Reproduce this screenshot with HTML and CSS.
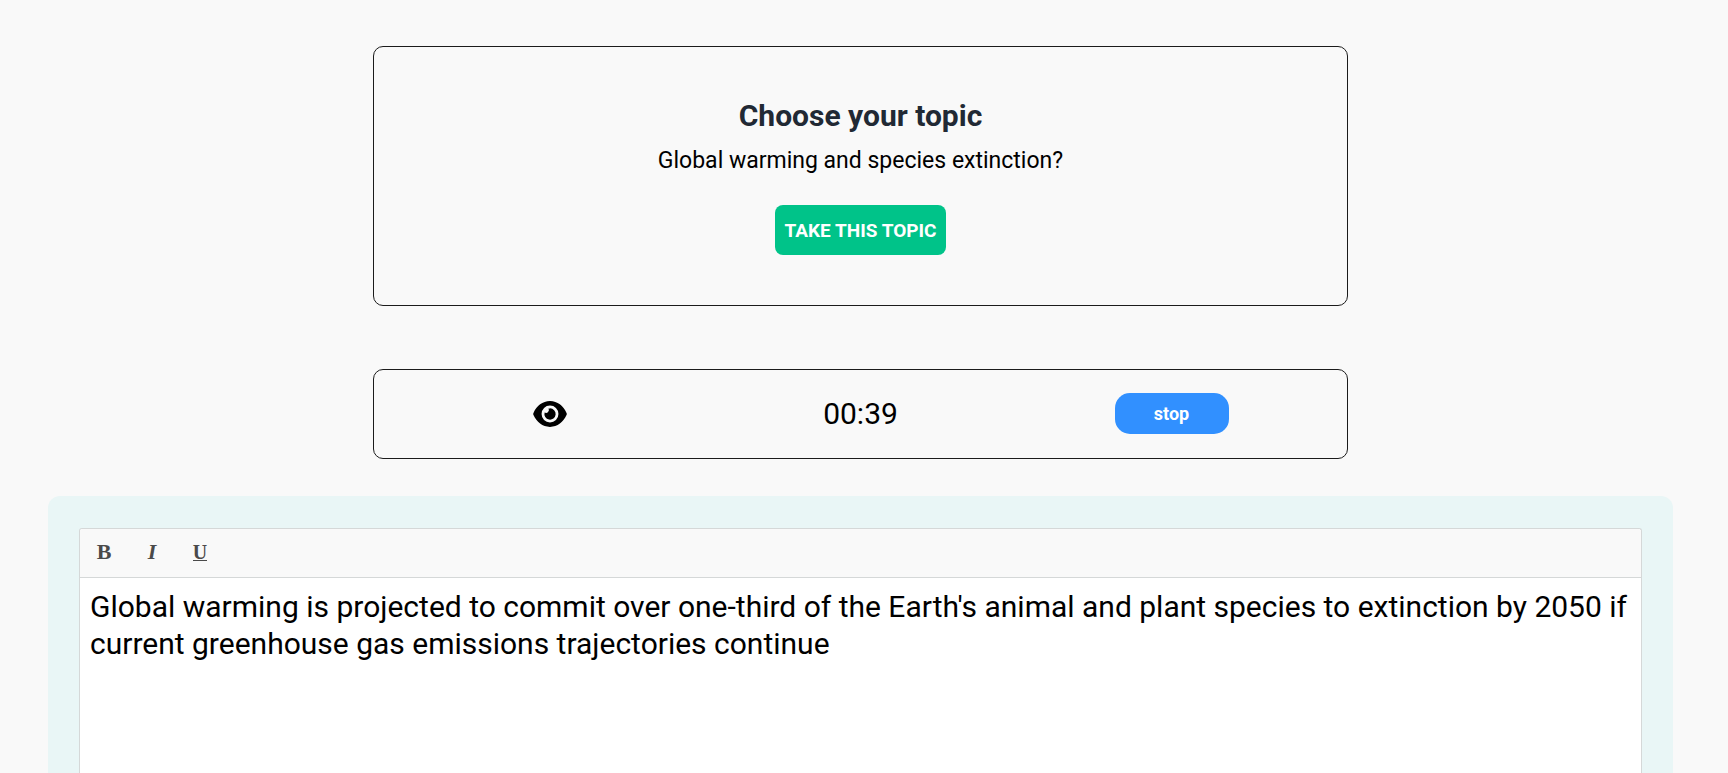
FILE: index.html
```html
<!DOCTYPE html>
<html lang="en">
<head>
<meta charset="utf-8">
<title>Choose your topic</title>
<link rel="stylesheet" href="styles.css">
</head>
<body>
<main class="page">
  <section class="card topic">
    <h1 class="topic-title">Choose your topic</h1>
    <p class="topic-text">Global warming and species extinction?</p>
    <button type="button" class="take-button">TAKE THIS TOPIC</button>
  </section>

  <section class="card timer">
    <button type="button" class="eye-button" aria-label="Toggle timer visibility">
      <svg class="eye-icon" viewBox="0 0 576 512" aria-hidden="true"><path fill-rule="evenodd" d="M288 36C160 36 60 120 6 238a40 40 0 0 0 0 36C60 392 160 476 288 476s228-84 282-202a40 40 0 0 0 0-36C516 120 416 36 288 36zM288 112a144 144 0 1 1 0 288a144 144 0 1 1 0-288z"/><path d="M288 160a96 96 0 1 1-92 70a48 48 0 0 0 66-66a95 95 0 0 1 26-4z"/></svg>
    </button>
    <time class="clock">00:39</time>
    <button type="button" class="stop-button">stop</button>
  </section>

  <section class="panel">
    <div class="editor">
      <div class="toolbar" role="toolbar" aria-label="Formatting">
        <button type="button" class="tool tool-bold" aria-label="Bold">B</button>
        <button type="button" class="tool tool-italic" aria-label="Italic">I</button>
        <button type="button" class="tool tool-underline" aria-label="Underline"><span class="underline-glyph">U</span></button>
      </div>
      <textarea class="writing" aria-label="Your text" spellcheck="false">Global warming is projected to commit over one-third of the Earth's animal and plant species to extinction by 2050 if current greenhouse gas emissions trajectories continue</textarea>
    </div>
  </section>
</main>
</body>
</html>
```
FILE: styles.css
```css
* {
  box-sizing: border-box;
}

html,
body {
  height: 100%;
}

body {
  margin: 0;
  background: #f9f9f9;
  color: #000;
  font-family: Roboto, "Liberation Sans", sans-serif;
  overflow: hidden;
}

button {
  border: 0;
  padding: 0;
  background: none;
  color: inherit;
  font-family: inherit;
  cursor: pointer;
}

.page {
  display: flex;
  flex-direction: column;
  align-items: center;
  min-height: 100%;
  padding: 46px 55px 0 48px;
}

.card {
  width: 60%;
  border: 1px solid #1b1b1b;
  border-radius: 10px;
}

.topic {
  display: flex;
  flex-direction: column;
  align-items: center;
  padding: 50px 20px;
}

.topic-title {
  margin: 0;
  color: #212934;
  font-size: 30px;
  font-weight: 700;
  line-height: 38px;
}

.topic-text {
  margin: 9px 0 27px;
  font-size: 23px;
  line-height: 34px;
}

.take-button {
  height: 50px;
  padding: 0 9px;
  border-radius: 8px;
  background: #00c389;
  color: #fff;
  font-size: 19px;
  font-weight: 700;
}

.timer {
  display: grid;
  grid-template-columns: repeat(3, 1fr);
  align-items: center;
  justify-items: center;
  margin-top: 63px;
  padding: 23px 20px 24px;
}

.eye-button {
  display: flex;
}

.eye-icon {
  width: 34px;
  height: 30px;
}

.clock {
  font-size: 30px;
  line-height: 40px;
}

.stop-button {
  width: 114px;
  height: 41px;
  border-radius: 15px;
  background: #3190ff;
  color: #fff;
  font-size: 18px;
  font-weight: 700;
}

.panel {
  display: flex;
  flex: 1;
  width: 100%;
  min-height: 277px;
  margin-top: 37px;
  padding: 32px 31px 0;
  border-radius: 12px 12px 0 0;
  background: #e9f6f6;
}

.editor {
  display: flex;
  flex: 1;
  flex-direction: column;
  border: 1px solid #d5d8d8;
  border-bottom: 0;
  border-radius: 3px 3px 0 0;
  background: #fff;
}

.toolbar {
  display: flex;
  gap: 8px;
  padding: 3px 4px 5px;
  border-bottom: 1px solid #d5d8d8;
  border-radius: 3px 3px 0 0;
  background: #f9f9f9;
}

.tool {
  width: 40px;
  height: 40px;
  color: #4a4a4a;
  font-family: "Liberation Serif", serif;
  font-size: 22px;
  font-weight: 700;
}

.tool-italic {
  font-style: italic;
}

.tool-underline {
  font-size: 20px;
}

.underline-glyph {
  display: inline-block;
  border-bottom: 1px solid #4a4a4a;
  line-height: 16px;
}

.writing {
  flex: 1;
  width: 100%;
  padding: 10px;
  border: 0;
  outline: 0;
  background: transparent;
  color: #000;
  font-family: inherit;
  font-size: 30px;
  line-height: 37px;
  resize: none;
}
```
